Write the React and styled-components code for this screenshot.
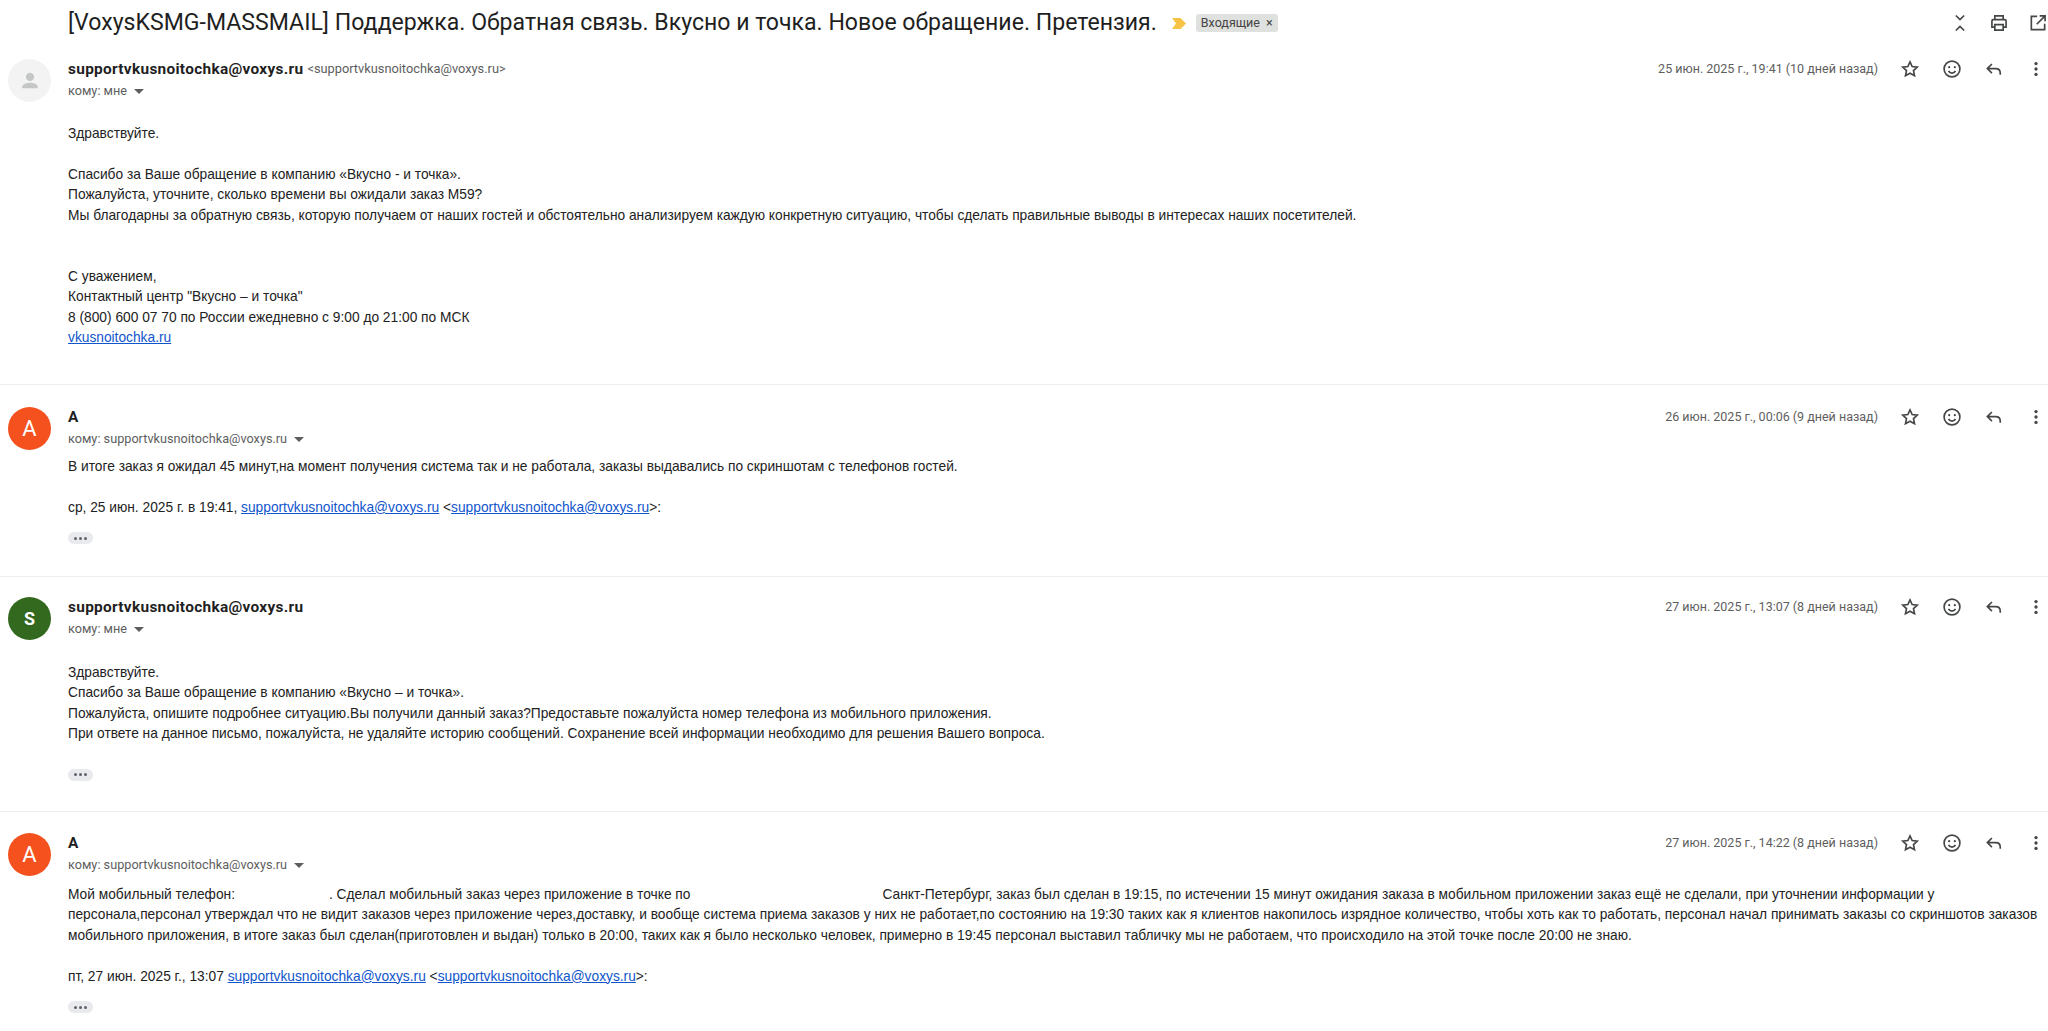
import React from 'react';
import styled, { createGlobalStyle } from 'styled-components';

const Global = createGlobalStyle`
  html, body {
    margin: 0;
    padding: 0;
    background: #fff;
    overflow: hidden;
  }
`;

const Page = styled.div`
  width: 2048px;
  height: 1031px;
  overflow: hidden;
  background: #fff;
  font-family: 'Liberation Sans', Arial, sans-serif;
`;

const SubjectBar = styled.header`
  height: 46px;
  padding-left: 68px;
  display: flex;
  align-items: center;
`;

const Subject = styled.h1`
  margin: 0;
  font: 400 23.08px/28px Roboto, Arial, sans-serif;
  color: #1f1f1f;
  white-space: nowrap;
`;

const Marker = styled.svg`
  margin-left: 15px;
  width: 14px;
  height: 11px;
`;

const Label = styled.span`
  margin-left: 10px;
  height: 18px;
  padding: 0 5px;
  display: flex;
  align-items: center;
  gap: 6px;
  border-radius: 3px;
  background: #dfe1df;
  color: #444;
  font: 400 12.5px/18px Roboto, Arial, sans-serif;
`;

const BarActions = styled.div`
  margin-left: auto;
  display: flex;
  align-items: center;
  gap: 19px;
  color: #444746;
`;

const Message = styled.article`
  position: relative;
  height: ${(p) => p.$height}px;
  padding-top: ${(p) => p.$top}px;
  box-sizing: border-box;
  border-bottom: ${(p) => (p.$last ? 'none' : '1px solid #efefef')};
`;

const MessageHead = styled.div`
  height: 42px;
  display: flex;
`;

const Avatar = styled.div`
  margin-left: 8px;
  width: 43px;
  height: 43px;
  border-radius: 50%;
  flex: 0 0 auto;
  display: flex;
  align-items: center;
  justify-content: center;
  background: ${(p) => p.$bg};
  color: #fff;
  font: ${(p) => (p.$bold ? '700 18px' : '400 22px')}/1 Roboto, Arial, sans-serif;
`;

const HeadText = styled.div`
  margin-left: 17px;
  flex: 1;
  min-width: 0;
`;

const FromLine = styled.div`
  height: 20px;
  display: flex;
  align-items: center;
  color: #1f1f1f;
  font: 700 15.4px/20px Roboto, Arial, sans-serif;
  letter-spacing: 0.3px;
  white-space: nowrap;
`;

const FromAddress = styled.span`
  margin-left: 4px;
  color: #5e5e5e;
  font-size: 12.8px;
  font-weight: 400;
  letter-spacing: 0;
`;

const ToLine = styled.div`
  margin-top: 3px;
  height: 18px;
  display: flex;
  align-items: center;
  gap: 6px;
  color: #5e5e5e;
  font: 400 12.7px/18px Roboto, Arial, sans-serif;
`;

const Caret = styled.span`
  margin-left: 1px;
  width: 0;
  height: 0;
  border-left: 5px solid transparent;
  border-right: 5px solid transparent;
  border-top: 5px solid #5e5e5e;
`;

const MetaSide = styled.div`
  height: 20px;
  display: flex;
  align-items: center;
  padding-right: 2px;
  color: #5e5e5e;
  font: 400 12.5px/20px Roboto, Arial, sans-serif;
  white-space: nowrap;
`;

const MetaIcons = styled.div`
  margin-left: 22px;
  display: flex;
  align-items: center;
  gap: 22px;
  color: #444746;
`;

const Body = styled.div`
  margin: ${(p) => p.$gap}px 0 0 68px;
  width: 1970px;
  color: #222;
  font-size: 13.75px;
  line-height: 20.4px;
`;

const Line = styled.div`
  min-height: 20.4px;
  white-space: nowrap;
`;

const Redacted = styled.span`
  display: inline-block;
  width: ${(p) => p.$w}px;
`;

const Link = styled.a`
  color: #1155cc;
  text-decoration: underline;
`;

const Dots = styled.div`
  margin-top: ${(p) => p.$top}px;
  width: 25px;
  height: 12px;
  border-radius: 6px;
  background: #e8eaed;
  display: flex;
  align-items: center;
  justify-content: center;
  gap: 2px;
`;

const Dot = styled.i`
  width: 3px;
  height: 3px;
  border-radius: 50%;
  background: #5f6368;
`;

const Icon = ({ size = 20, children, ...rest }) => (
  <svg width={size} height={size} viewBox="0 0 24 24" fill="none" stroke="currentColor" strokeWidth="2" {...rest}>
    {children}
  </svg>
);

const StarIcon = () => (
  <Icon>
    <path d="M12 3.5l2.6 5.6 6.1.7-4.5 4.2 1.2 6-5.4-3-5.4 3 1.2-6-4.5-4.2 6.1-.7z" strokeLinejoin="miter" />
  </Icon>
);

const SmileIcon = () => (
  <Icon>
    <circle cx="12" cy="12" r="9.5" />
    <circle cx="8.6" cy="9.8" r="1.3" fill="currentColor" stroke="none" />
    <circle cx="15.4" cy="9.8" r="1.3" fill="currentColor" stroke="none" />
    <path d="M7.8 14.2c.9 1.8 2.4 2.7 4.2 2.7s3.3-.9 4.2-2.7" />
  </Icon>
);

const ReplyIcon = () => (
  <Icon>
    <path d="M9.5 6L4 11.5 9.5 17M4 11.5h10c3.5 0 5.5 2 5.5 5.5v2" />
  </Icon>
);

const MoreIcon = () => (
  <Icon>
    <circle cx="12" cy="5.5" r="2" fill="currentColor" stroke="none" />
    <circle cx="12" cy="12" r="2" fill="currentColor" stroke="none" />
    <circle cx="12" cy="18.5" r="2" fill="currentColor" stroke="none" />
  </Icon>
);

const CollapseIcon = () => (
  <Icon>
    <path d="M7 3l5 5 5-5M7 21l5-5 5 5" />
  </Icon>
);

const PrintIcon = () => (
  <Icon>
    <path d="M7 8V3.5h10V8M7 17H3.5v-7.5a1.5 1.5 0 0 1 1.5-1.5h14a1.5 1.5 0 0 1 1.5 1.5V17H17" />
    <path d="M7 14h10v6.5H7z" />
  </Icon>
);

const OpenIcon = () => (
  <Icon>
    <path d="M11 4H4v16h16v-7M14 3.5h6.5V10M20.5 3.5L10.5 13.5" />
  </Icon>
);

const PersonAvatar = () => (
  <svg width="22" height="22" viewBox="0 0 24 24" fill="#c4c7c5">
    <circle cx="12" cy="7.5" r="4.5" />
    <path d="M3.5 20v-1.5c0-3 5.5-4.5 8.5-4.5s8.5 1.5 8.5 4.5V20z" />
  </svg>
);

const Head = ({ avatar, from, address, to, date }) => (
  <MessageHead>
    {avatar}
    <HeadText>
      <FromLine>
        {from}
        {address && <FromAddress>{address}</FromAddress>}
      </FromLine>
      <ToLine>
        {to}
        <Caret />
      </ToLine>
    </HeadText>
    <MetaSide>
      {date}
      <MetaIcons>
        <StarIcon />
        <SmileIcon />
        <ReplyIcon />
        <MoreIcon />
      </MetaIcons>
    </MetaSide>
  </MessageHead>
);

const More = ({ top }) => (
  <Dots $top={top}>
    <Dot />
    <Dot />
    <Dot />
  </Dots>
);

const MAIL = 'supportvkusnoitochka@voxys.ru';

export default function App() {
  return (
    <Page>
      <Global />
      <SubjectBar>
        <Subject>[VoxysKSMG-MASSMAIL] Поддержка. Обратная связь. Вкусно и точка. Новое обращение. Претензия.</Subject>
        <Marker viewBox="0 0 14 11">
          <path d="M0 0h8.5L14 5.5 8.5 11H0l4-5.5z" fill="#f6c344" />
        </Marker>
        <Label>
          Входящие <span>×</span>
        </Label>
        <BarActions>
          <CollapseIcon />
          <PrintIcon />
          <OpenIcon />
        </BarActions>
      </SubjectBar>

      <Message $height={339} $top={13}>
        <Head
          avatar={
            <Avatar $bg="#f3f3f3">
              <PersonAvatar />
            </Avatar>
          }
          from={MAIL}
          address={`<${MAIL}>`}
          to="кому: мне"
          date="25 июн. 2025 г., 19:41 (10 дней назад)"
        />
        <Body $gap={23}>
          <Line>Здравствуйте.</Line>
          <Line />
          <Line>Спасибо за Ваше обращение в компанию «Вкусно - и точка».</Line>
          <Line>Пожалуйста, уточните, сколько времени вы ожидали заказ М59?</Line>
          <Line>
            Мы благодарны за обратную связь, которую получаем от наших гостей и обстоятельно анализируем каждую конкретную
            ситуацию, чтобы сделать правильные выводы в интересах наших посетителей.
          </Line>
          <Line />
          <Line />
          <Line>С уважением,</Line>
          <Line>Контактный центр "Вкусно – и точка"</Line>
          <Line>8 (800) 600 07 70 по России ежедневно с 9:00 до 21:00 по МСК</Line>
          <Line>
            <Link>vkusnoitochka.ru</Link>
          </Line>
        </Body>
      </Message>

      <Message $height={192} $top={22}>
        <Head
          avatar={<Avatar $bg="#f4511e">A</Avatar>}
          from="A"
          to={`кому: ${MAIL}`}
          date="26 июн. 2025 г., 00:06 (9 дней назад)"
        />
        <Body $gap={8}>
          <Line>
            В итоге заказ я ожидал 45 минут,на момент получения система так и не работала, заказы выдавались по скриншотам с
            телефонов гостей.
          </Line>
          <Line />
          <Line>
            ср, 25 июн. 2025 г. в 19:41, <Link>{MAIL}</Link> &lt;<Link>{MAIL}</Link>&gt;:
          </Line>
        </Body>
        <Body $gap={0}>
          <More top={14} />
        </Body>
      </Message>

      <Message $height={235} $top={20}>
        <Head
          avatar={
            <Avatar $bg="#33691e" $bold>
              S
            </Avatar>
          }
          from={MAIL}
          to="кому: мне"
          date="27 июн. 2025 г., 13:07 (8 дней назад)"
        />
        <Body $gap={24}>
          <Line>Здравствуйте.</Line>
          <Line>Спасибо за Ваше обращение в компанию «Вкусно – и точка».</Line>
          <Line>Пожалуйста, опишите подробнее ситуацию.Вы получили данный заказ?Предоставьте пожалуйста номер телефона из мобильного приложения.</Line>
          <Line>При ответе на данное письмо, пожалуйста, не удаляйте историю сообщений. Сохранение всей информации необходимо для решения Вашего вопроса.</Line>
        </Body>
        <Body $gap={0}>
          <More top={24} />
        </Body>
      </Message>

      <Message $height={219} $top={21} $last>
        <Head
          avatar={<Avatar $bg="#f4511e">A</Avatar>}
          from="A"
          to={`кому: ${MAIL}`}
          date="27 июн. 2025 г., 14:22 (8 дней назад)"
        />
        <Body $gap={10}>
          <Line>
            Мой мобильный телефон:<Redacted $w={94} />. Сделал мобильный заказ через приложение в точке по<Redacted $w={192} />
            Санкт-Петербург, заказ был сделан в 19:15, по истечении 15 минут ожидания заказа в мобильном приложении заказ ещё не сделали, при уточнении информации у
          </Line>
          <Line>
            персонала,персонал утверждал что не видит заказов через приложение через,доставку, и вообще система приема заказов у них не работает,по состоянию на 19:30 таких как я клиентов накопилось изрядное количество, чтобы хоть как то работать, персонал начал принимать заказы со скриншотов заказов
          </Line>
          <Line>
            мобильного приложения, в итоге заказ был сделан(приготовлен и выдан) только в 20:00, таких как я было несколько человек, примерно в 19:45 персонал выставил табличку мы не работаем, что происходило на этой точке после 20:00 не знаю.
          </Line>
          <Line />
          <Line>
            пт, 27 июн. 2025 г., 13:07 <Link>{MAIL}</Link> &lt;<Link>{MAIL}</Link>&gt;:
          </Line>
        </Body>
        <Body $gap={0}>
          <More top={14} />
        </Body>
      </Message>
    </Page>
  );
}
